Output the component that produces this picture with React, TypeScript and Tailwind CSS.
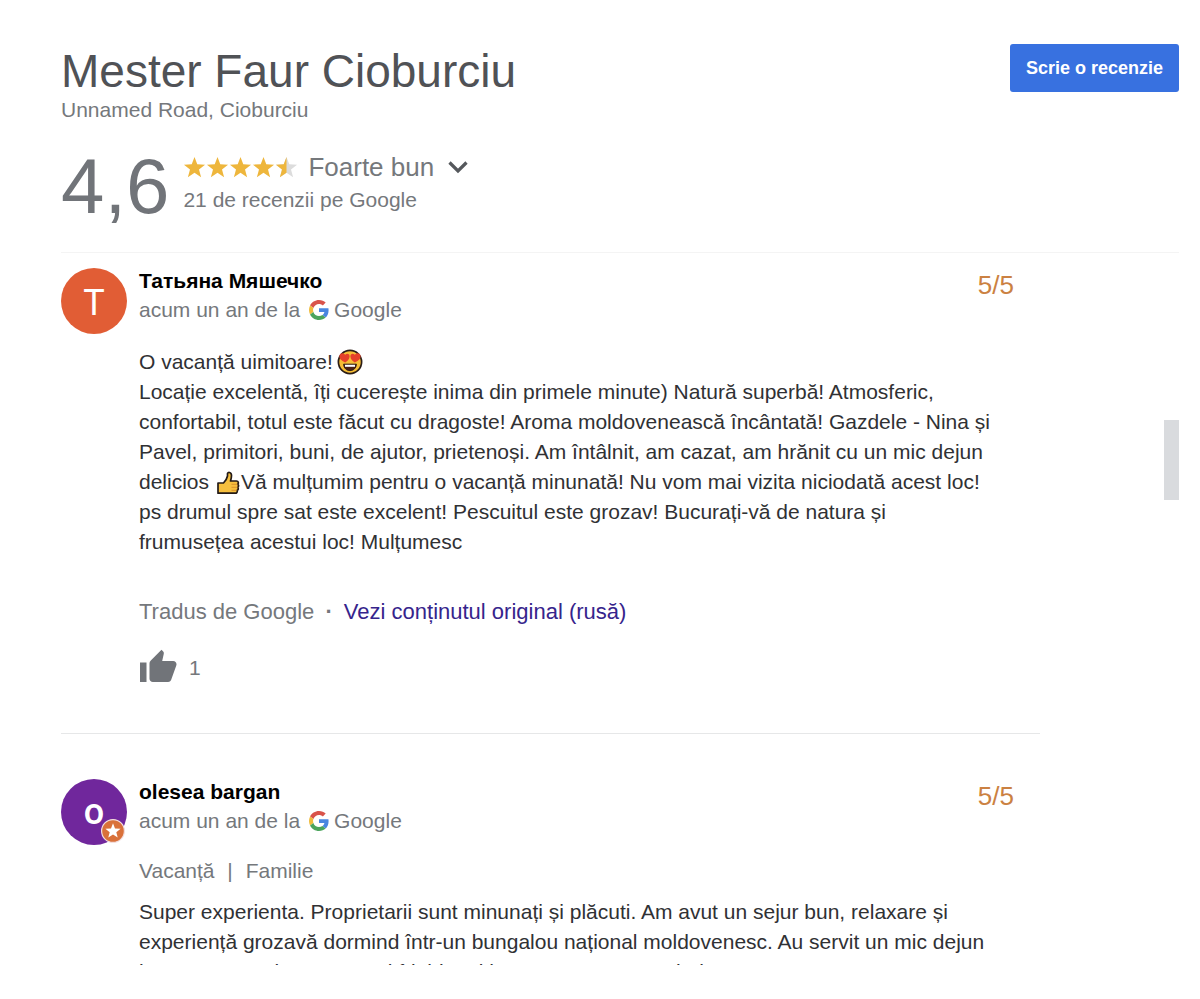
import React from "react";

const STAR = "M12 1l2.900 7.600 8.100.4-6.300 5.100 2.200 8L12 17.600 5.100 22.100l2.200-8L1 9l8.100-.4z";

function Star({ half = false }: { half?: boolean }) {
  return (
    <svg viewBox="0 0 24 24" className="size-[23px]" aria-hidden="true">
      <path d={STAR} fill={half ? "#dcdcdc" : "#eeb63c"} />
      {half && <path d="M12 1V17.600L5.100 22.100l2.200-8L1 9l8.100-.4z" fill="#eeb63c" />}
    </svg>
  );
}

function GoogleG() {
  return (
    <svg viewBox="0 0 48 48" className="mr-[5px] ml-[9px] size-5 shrink-0" aria-hidden="true">
      <path fill="#d9534a" d="M24 9.5c3.54 0 6.71 1.22 9.21 3.6l6.85-6.85C35.9 2.38 30.47 0 24 0 14.62 0 6.51 5.38 2.56 13.22l7.98 6.19C12.43 13.72 17.74 9.5 24 9.5z" />
      <path fill="#4a86e0" d="M46.98 24.55c0-1.57-.15-3.09-.38-4.55H24v9.02h12.94c-.58 2.96-2.26 5.48-4.78 7.18l7.73 6c4.51-4.18 7.09-10.36 7.09-17.65z" />
      <path fill="#efbb3c" d="M10.53 28.59c-.48-1.45-.76-2.99-.76-4.59s.27-3.14.76-4.59l-7.98-6.19C.92 16.46 0 20.12 0 24c0 3.88.92 7.54 2.56 10.78l7.97-6.19z" />
      <path fill="#4ba45c" d="M24 48c6.48 0 11.93-2.13 15.89-5.81l-7.73-6c-2.15 1.45-4.92 2.3-8.16 2.3-6.26 0-11.57-4.22-13.47-9.91l-7.98 6.19C6.51 42.62 14.62 48 24 48z" />
    </svg>
  );
}

function HeartEyes() {
  return (
    <svg viewBox="0 0 26 26" className="ml-1 inline-block size-[26px] align-[-6px]" role="img" aria-label="😍">
      <circle cx="13" cy="13" r="11.6" fill="#f6bd35" stroke="#2b1d16" strokeWidth="1.7" />
      <path d="M8.200 13.600C4.200 11.600 2 9.400 2.400 6.700 3 3.800 6.500 3.400 8.200 5.800 10 3.700 13 4.900 12.600 7.800 12.300 10.200 10.700 12 8.200 13.600z" fill="#e5402a" />
      <path d="M17.800 13.600c4-2 6.200-4.200 5.800-6.900-.6-2.900-4.100-3.300-5.800-.9-1.800-2.100-4.800-.9-4.400 2 .3 2.400 1.900 4.200 4.400 5.800z" fill="#e5402a" />
      <path d="M6.600 15.200h12.800c-.2 4-3 6.400-6.400 6.400s-6.200-2.400-6.400-6.400z" fill="#4a2114" stroke="#2b1d16" />
      <path d="M8 15.800h10v2H8z" fill="#fff" />
    </svg>
  );
}

function ThumbEmoji() {
  return (
    <svg viewBox="0 0 24 24" className="mx-px inline-block size-6 align-[-6px]" role="img" aria-label="👍">
      <path d="M2 12h5.500C9.500 10 11 7.500 11.500 5V2.600c0-1.700 4-1.900 4 1.900 0 2.300-.6 4-1 5.500h6c2 0 2.400 2.300 1.200 3.200 1.200.8 1.100 2.600.1 3.100.8.900.6 2.600-.6 3 .4 1.700-.4 2.900-2.100 2.900H2z" fill="#f6bf3e" stroke="#231a17" strokeWidth="1.700" strokeLinejoin="round" />
      <path d="M15.500 13.300h6M15.500 16.300h6M15.500 19.300h5" stroke="#d9922c" strokeWidth="1" />
    </svg>
  );
}

type ReviewProps = {
  name: string;
  initial: string;
  avatar: string;
  guide?: boolean;
  children: React.ReactNode;
};

function Review({ name, initial, avatar, guide = false, children }: ReviewProps) {
  return (
    <article className="flex gap-3">
      <div className={`relative flex size-[66px] shrink-0 items-center justify-center rounded-full text-white ${avatar}`}>
        <span className="font-[Roboto,sans-serif] text-[36px] leading-none">{initial}</span>
        {guide && (
          <svg viewBox="0 0 24 24" className="absolute right-0.5 bottom-0.5 size-6" aria-hidden="true">
            <circle cx="12" cy="12" r="11.400" fill="#d9713a" stroke="#f2dfe0" strokeWidth="1.200" />
            <path d="M12 4.200l2 5.200 5.600.3-4.300 3.500 1.400 5.400L12 15.600l-4.700 3 1.400-5.400-4.300-3.500 5.600-.3z" fill="#fff" />
          </svg>
        )}
      </div>
      <div className="min-w-0 flex-1">
        <div className="flex justify-between pr-[26px]">
          <div>
            <h2 className="leading-[26px] font-bold text-black">{name}</h2>
            <p className="flex items-center leading-8">
              acum un an de la <GoogleG />Google
            </p>
          </div>
          <p className="text-[26px] leading-[34px] text-[#cb8142]">5/5</p>
        </div>
        {children}
      </div>
    </article>
  );
}

export default function App() {
  return (
    <main className="flex h-screen flex-col bg-white pt-11 pr-[21px] pb-[34px] pl-[61px] font-['Liberation_Sans',Arial,sans-serif] text-[21px] text-[#75787c]">
      <header className="flex items-start justify-between border-b border-[#f4f4f4] pb-[25px]">
        <div>
          <h1 className="text-[46px] leading-[54px] text-[#505256]">Mester Faur Cioburciu</h1>
          <p className="leading-6">Unnamed Road, Cioburciu</p>
          <div className="mt-[23px] flex gap-[14px]">
            <span className="text-[78px] leading-[82px] text-[#717479]">4,6</span>
            <div className="pt-1">
              <button type="button" className="flex items-center text-[26px] leading-9">
                <span className="flex" role="img" aria-label="4,6 din 5 stele">
                  <Star />
                  <Star />
                  <Star />
                  <Star />
                  <Star half />
                </span>
                <span className="ml-2.5">Foarte bun</span>
                <svg viewBox="0 0 20 14" className="ml-3.5 h-3.5 w-5" fill="none" stroke="#55585c" strokeWidth="3.200" aria-hidden="true">
                  <path d="M1.500 2.500l8.500 8.500 8.500-8.500" />
                </svg>
              </button>
              <p className="leading-[30px]">21 de recenzii pe Google</p>
            </div>
          </div>
        </div>
        <button type="button" className="h-12 rounded-[3px] bg-[#3871e0] px-4 text-[18px] font-bold text-white">
          Scrie o recenzie
        </button>
      </header>

      <div className="flex min-h-0 flex-1 justify-between">
        <section className="min-w-0 flex-1 overflow-hidden">
          <div className="border-b border-[#e6e7e8] pt-[15px] pb-[49px]">
            <Review name="Татьяна Мяшечко" initial="T" avatar="bg-[#e15d35] pt-1 font-normal">
              <p className="mt-[21px] pr-6 leading-[30px] text-[#303134]">
                O vacanță uimitoare!<HeartEyes />
                <br />
                Locație excelentă, îți cucerește inima din primele minute) Natură superbă! Atmosferic,
                confortabil, totul este făcut cu dragoste! Aroma moldovenească încântată! Gazdele - Nina și
                Pavel, primitori, buni, de ajutor, prietenoși. Am întâlnit, am cazat, am hrănit cu un mic dejun
                delicios <ThumbEmoji />Vă mulțumim pentru o vacanță minunată! Nu vom mai vizita niciodată acest loc!
                <br />
                ps drumul spre sat este excelent! Pescuitul este grozav! Bucurați-vă de natura și
                <br />
                frumusețea acestui loc! Mulțumesc
              </p>
              <p className="mt-10 text-[22px] leading-[30px]">
                Tradus de Google <span className="mx-[5px] font-bold">·</span>{" "}
                <a href="#original" className="text-[#36248c]">Vezi conținutul original (rusă)</a>
              </p>
              <button type="button" className="mt-[21px] flex items-center gap-3">
                <svg viewBox="0 0 38 34" className="h-[34px] w-[38px]" fill="#717479" aria-hidden="true">
                  <path d="M1 13.500h6.500V33H1zM10.500 14.500c0-1.200.5-2.200 1.300-3L22.500.8l1.700 1.700c.6.6.8 1.400.6 2.200l-1.600 7.300h11c1.900 0 3.300 1.500 3.300 3.300 0 .6-.1 1-.3 1.500L32.100 31c-.5 1.200-1.700 2-3 2H13.800c-1.800 0-3.300-1.500-3.300-3.300z" />
                </svg>
                <span className="pt-1">1</span>
              </button>
            </Review>
          </div>
          <div className="pt-[45px]">
            <Review name="olesea bargan" initial="o" avatar="bg-[#70279c] font-medium" guide>
              <p className="mt-[19px] leading-[30px]">
                Vacanță <span className="mx-[7px]">|</span> Familie
              </p>
              <p className="mt-[11px] pr-6 leading-[30px] text-[#303134]">
                Super experienta. Proprietarii sunt minunați și plăcuti. Am avut un sejur bun, relaxare și
                experiență grozavă dormind într-un bungalou național moldovenesc. Au servit un mic dejun
                bun. Iar seara in zona aveți frigider și bere cu tot ce ne trebuie.
              </p>
            </Review>
          </div>
        </section>
        <div className="flex w-[139px] shrink-0 justify-end">
          <div className="mt-[167px] h-20 w-[15px] bg-[#d9dbde]" aria-hidden="true" />
        </div>
      </div>
    </main>
  );
}
